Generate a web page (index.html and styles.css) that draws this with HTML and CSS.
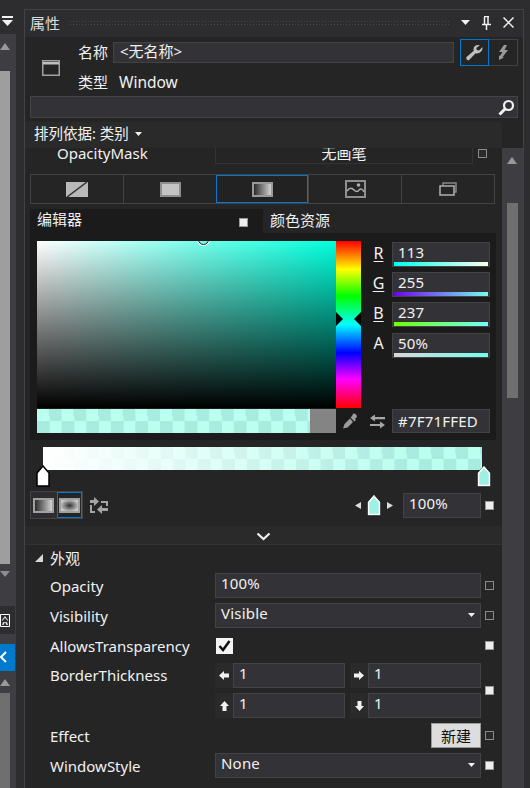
FILE: index.html
```html
<!DOCTYPE html>
<html lang="zh-CN">
<head>
  <meta charset="utf-8">
  <title>属性</title>
  <link rel="stylesheet" href="styles.css">
</head>
<body>

<aside class="side">
  <div class="side-top">
    <svg class="side-menu" width="11" height="11" viewBox="0 0 11 11"><path d="M0 0h11v2H0zM0 4h11L5.500 10z" fill="#f1f1f1"/></svg>
  </div>
  <div class="side-bar">
    <div class="arrow-up side-arrow"></div>
    <div class="side-thumb"></div>
    <div class="arrow-down side-arrow"></div>
    <div class="side-tool"><svg width="10" height="13" viewBox="0 0 10 13"><path d="M.5.500h9v12h-9z" fill="none" stroke="#fff"/><path d="M5 2 2 6v1l3-3 3 3V6zM3 8l-1 3h1.500L5 8l1.500 3H8L7 8z" fill="#ddd"/></svg></div>
    <div class="side-active"><svg width="10" height="14" viewBox="0 0 10 14"><path d="M6 2 1 7l5 5" fill="none" stroke="#fff" stroke-width="2"/></svg></div>
    <div class="arrow-up side-arrow second"></div>
    <div class="side-thumb dim"></div>
  </div>
</aside>

<section class="panel">
  <header class="titlebar">
    <span class="title">属性</span>
    <span class="grip"></span>
    <svg width="9" height="5" viewBox="0 0 9 5"><path d="M0 0h9L4.500 5z" fill="#f1f1f1"/></svg>
    <svg class="pin" width="9" height="14" viewBox="0 0 9 14"><path d="M2 .500h5M2.500 1v7M6 1v7M0 8.500h9M4.500 9v5" fill="none" stroke="#f1f1f1" stroke-width="1.500"/></svg>
    <svg class="close" width="11" height="11" viewBox="0 0 11 11"><path d="M.5.500l10 10M10.500.500l-10 10" stroke="#f1f1f1" stroke-width="1.500"/></svg>
  </header>

  <div class="head">
    <svg class="win-icon" width="18" height="16" viewBox="0 0 18 16"><rect x=".75" y=".75" width="16.500" height="14.500" fill="none" stroke="#a0a0a0" stroke-width="1.500"/><path d="M1 2h16v2.500H1z" fill="#c0c0c0"/></svg>
    <span class="head-label">名称</span>
    <div class="name-box">&lt;无名称&gt;</div>
    <div class="mode-btns">
      <div class="mode on"><svg width="17" height="16" viewBox="0 0 17 16"><path d="M16.500 2 13 5.500 10.800 5 10.300 3 13.800 .3C11 -.6 7.500 1 7.500 4.200c0 .6.100 1.100.300 1.500L.8 11.700c-1.500 1.400.4 4.600 2.300 3.300l6.500-6.800c3.300 1 7.400-1.800 6.900-6.200z" fill="#c0c0c0"/></svg></div>
      <div class="mode"><svg width="11" height="15" viewBox="0 0 11 15"><path d="M6 0 1 7h3.500L2 11l-1-.5L1 15l5-2.500-1.500-.5L10 5H6.500L9 0z" fill="#9a9a9a"/></svg></div>
    </div>
    <span class="head-label second">类型</span>
    <span class="type-name">Window</span>
  </div>

  <div class="search">
    <svg width="17" height="17" viewBox="0 0 17 17"><circle cx="10.500" cy="6.500" r="4.500" fill="none" stroke="#f1f1f1" stroke-width="2.200"/><path d="M7 10l-5.500 5.500" stroke="#f1f1f1" stroke-width="3"/></svg>
  </div>

  <div class="sortbar">排列依据: 类别 <svg width="7" height="4" viewBox="0 0 7 4"><path d="M0 0h7L3.500 4z" fill="#f1f1f1"/></svg></div>

  <div class="body">
    <div class="props">
      <div class="cut-row">
        <span class="cut-name">OpacityMask</span>
        <span class="cut-box">无画笔</span>
        <span class="sq"></span>
      </div>

      <div class="brush-tabs">
        <div class="brush-tab"><svg width="22" height="15" viewBox="0 0 22 15"><path d="M0 0h22v15H0z" fill="#b9b9b9"/><path d="M1 15 21 0" stroke="#333" stroke-width="1.500"/></svg></div>
        <div class="brush-tab"><svg width="21" height="15" viewBox="0 0 21 15"><rect x="1" y="1" width="19" height="13" fill="#c4c4c4" stroke="#8f8f8f" stroke-width="2"/></svg></div>
        <div class="brush-tab on"><svg width="21" height="15" viewBox="0 0 21 15"><defs><linearGradient id="g1"><stop offset="0" stop-color="#222"/><stop offset="1" stop-color="#ddd"/></linearGradient></defs><rect x="1" y="1" width="19" height="13" fill="url(#g1)" stroke="#999" stroke-width="2"/></svg></div>
        <div class="brush-tab"><svg width="21" height="18" viewBox="0 0 21 18"><rect x="1" y="1" width="19" height="16" fill="none" stroke="#8f8f8f" stroke-width="2"/><circle cx="13.500" cy="5" r="1.800" fill="#b0b0b0"/><path d="M2 11c3-4 5-3 7-1s4 2 5 0 4-1 5 2" fill="none" stroke="#b0b0b0" stroke-width="1.500"/></svg></div>
        <div class="brush-tab"><svg width="18" height="14" viewBox="0 0 18 14"><path d="M4 3V1h13v9h-2" fill="none" stroke="#888" stroke-width="1.500"/><rect x="1" y="4" width="14" height="9" fill="#252526" stroke="#b0b0b0" stroke-width="1.500"/></svg></div>
      </div>

      <div class="editor-tabs">
        <div class="editor-tab on">编辑器<span class="sq full"></span></div>
        <div class="editor-tab">颜色资源</div>
      </div>

      <div class="editor">
        <div class="sv"><span class="sv-dot"></span></div>
        <div class="hue"><span class="hue-l"></span><span class="hue-r"></span></div>
        <div class="channels">
          <div class="channel"><u>R</u><div class="field">113<i class="strip s-r"></i></div></div>
          <div class="channel"><u>G</u><div class="field">255<i class="strip s-g"></i></div></div>
          <div class="channel"><u>B</u><div class="field">237<i class="strip s-b"></i></div></div>
          <div class="channel"><b>A</b><div class="field">50%<i class="strip s-a"></i></div></div>
        </div>
        <div class="preview"><div class="preview-check"></div><div class="preview-gray"></div></div>
        <div class="tools">
          <svg width="15" height="16" viewBox="0 0 15 16"><path d="M10 1c1.500-1.500 5 1.500 3.500 3.500L12 6l1 1-1.500 1.500-4-4L9 3zM7 5.500 1.500 11 0 15.500 4.500 14.500 10 9z" fill="#9c9c9c"/></svg>
          <svg width="15" height="15" viewBox="0 0 15 15"><path d="M5 .5 0 4l5 3.500V5.200h10V3H5zM10 7.500l5 3.500-5 3.500v-2.400H0v-2.200h10z" fill="#a6a6a6"/></svg>
        </div>
        <div class="field hex">#7F71FFED</div>
      </div>

      <div class="grad">
        <div class="grad-bar"></div>
        <svg class="stop stop-l" width="14" height="22" viewBox="0 0 14 22"><path d="M7 1 13 8v13H1V8z" fill="#fff" stroke="#000" stroke-width="1.500"/></svg>
        <svg class="stop stop-r" width="14" height="22" viewBox="0 0 14 22"><path d="M7 .5 13.500 8v13.500H.5V8z" fill="#000"/><path d="M7 2 12.500 8.300V20.500H1.500V8.300z" fill="#9ff0e4" stroke="#fff" stroke-width="1.500"/></svg>
      </div>

      <div class="grad-row">
        <div class="kinds">
          <div class="kind"><svg width="21" height="15" viewBox="0 0 21 15"><rect x="1" y="1" width="19" height="13" fill="url(#g1)" stroke="#a0a0a0" stroke-width="2"/></svg></div>
          <div class="kind on"><svg width="21" height="15" viewBox="0 0 21 15"><defs><radialGradient id="g2"><stop offset="0" stop-color="#333"/><stop offset="1" stop-color="#ccc"/></radialGradient></defs><rect x="1" y="1" width="19" height="13" fill="url(#g2)" stroke="#a0a0a0" stroke-width="2"/></svg></div>
        </div>
        <svg class="shuffle" width="18" height="17" viewBox="0 0 18 17"><path d="M0 3h4V0l5 4.500L4 9V6H0zM18 11h-6V8l-5 4.500 5 4.500v-3h6zM0 8h2v6h3v2H0zM11 4h7v5h-2V6h-5z" fill="#a4a4a4"/></svg>
        <div class="stop-pick">
          <svg width="6" height="7" viewBox="0 0 6 7"><path d="M6 0v7L0 3.500z" fill="#ddd"/></svg>
          <svg width="14" height="22" viewBox="0 0 14 22"><path d="M7 .5 13.500 8v13.500H.5V8z" fill="#000"/><path d="M7 2 12.500 8.300V20.500H1.500V8.300z" fill="#9ff0e4" stroke="#fff" stroke-width="1.500"/></svg>
          <svg width="6" height="7" viewBox="0 0 6 7"><path d="M0 0v7l6-3.500z" fill="#ddd"/></svg>
        </div>
        <div class="field pct">100%</div>
        <span class="sq full"></span>
      </div>

      <div class="expander"><svg width="15" height="9" viewBox="0 0 15 9"><path d="M1.500 1.500 7.500 7l6-5.500" fill="none" stroke="#f1f1f1" stroke-width="2.200"/></svg></div>

      <div class="group-head"><svg width="8" height="8" viewBox="0 0 8 8"><path d="M8 0v8H0z" fill="#d8d8d8"/></svg>外观</div>

      <div class="rows">
        <span class="row-name">Opacity</span>
        <div class="field">100%</div>
        <span class="sq"></span>

        <span class="row-name">Visibility</span>
        <div class="field combo">Visible<svg width="7" height="4" viewBox="0 0 7 4"><path d="M0 0h7L3.500 4z" fill="#f1f1f1"/></svg></div>
        <span class="sq"></span>

        <span class="row-name">AllowsTransparency</span>
        <div class="check-cell"><div class="check"><svg width="13" height="12" viewBox="0 0 13 12"><path d="M1.500 6 5 10l6.500-9" fill="none" stroke="#111" stroke-width="2.500"/></svg></div></div>
        <span class="sq full"></span>

        <span class="row-name tall">BorderThickness</span>
        <div class="thick tall">
          <div class="side-val"><span class="dir"><svg width="10" height="9" viewBox="0 0 10 9"><path d="M5 0v2.500h5v4H5V9L0 4.500z" fill="#f1f1f1"/></svg></span><div class="field">1</div></div>
          <div class="side-val"><span class="dir"><svg width="10" height="9" viewBox="0 0 10 9"><path d="M5 0v2.500H0v4h5V9l5-4.500z" fill="#f1f1f1"/></svg></span><div class="field">1</div></div>
          <div class="side-val"><span class="dir"><svg width="9" height="10" viewBox="0 0 9 10"><path d="M0 5h2.500v5h4V5H9L4.500 0z" fill="#f1f1f1"/></svg></span><div class="field">1</div></div>
          <div class="side-val"><span class="dir"><svg width="9" height="10" viewBox="0 0 9 10"><path d="M0 5h2.500V0h4v5H9l-4.500 5z" fill="#f1f1f1"/></svg></span><div class="field">1</div></div>
        </div>
        <span class="sq full tall"></span>

        <span class="row-name">Effect</span>
        <div class="btn-cell"><button class="new-btn">新建</button></div>
        <span class="sq"></span>

        <span class="row-name">WindowStyle</span>
        <div class="field combo">None<svg width="7" height="4" viewBox="0 0 7 4"><path d="M0 0h7L3.500 4z" fill="#f1f1f1"/></svg></div>
        <span class="sq full"></span>
      </div>
    </div>

    <div class="vscroll">
      <div class="arrow-up"></div>
      <div class="vthumb"></div>
    </div>
  </div>
</section>

</body>
</html>
```

FILE: styles.css
```css
:root { --bg:#252526; --chrome:#2d2d30; --track:#3e3e42; --line:#434346; --field:#333337; --fg:#f1f1f1; --blue:#007acc; --well:#1b1b1c; }
*{box-sizing:border-box}
html,body{height:100%}
body{margin:0;height:788px;overflow:hidden;display:flex;background:var(--chrome);color:var(--fg);
     font:15px/1.2 "Noto Sans","Noto Sans CJK SC",sans-serif}
svg{display:block;flex:none}
u{text-underline-offset:2px}

/* left strip */
.side{width:24px;flex:none}
.side-top{height:34px;padding:16px 0 0 2px}
.side-bar{width:16px;height:754px;background:var(--track);display:flex;flex-direction:column;align-items:flex-start}
.side-arrow{margin:9px 0 0 0}
.side-thumb{width:10px;height:494px;margin-top:21px;background:#9e9e9e}
.side-thumb.dim{height:95px;margin-top:7px;background:#6f6f6f}
.arrow-up{width:0;height:0;border:5px solid transparent;border-top:0;border-bottom:7px solid #999}
.arrow-down{width:0;height:0;border:5px solid transparent;border-bottom:0;border-top:6px solid #8c8c8c}
.arrow-down.side-arrow{margin-top:7px}
.side-tool{width:15px;height:28px;margin-top:29px;padding-top:8px;background:#2d2d30}
.side-active{width:15px;height:27px;margin-top:10px;padding-top:6px;background:var(--blue)}
.side-arrow.second{margin-top:8px}

/* panel */
.panel{width:500px;flex:none;margin-top:9px;border:1px solid var(--line);border-bottom:0;background:var(--bg);display:flex;flex-direction:column}
.titlebar{height:27px;flex:none;background:var(--chrome);display:flex;align-items:center;padding:0 9px 2px 5px}
.title{color:#dcdcdc;width:39px}
.grip{width:382px;height:6px;background:radial-gradient(circle,#4a4a4e 1px,transparent 1px) 0 0/3px 3px}
.titlebar>svg{margin-left:10px}
.titlebar .pin{margin-left:12px}
.titlebar .close{margin-left:12px}

.head{display:grid;grid-template-columns:36px 35px 1fr 58px;grid-template-rows:27px 30px;padding:2px 5px 0 17px;height:59px;flex:none;align-items:center}
.win-icon{grid-row:1/3;grid-column:1;margin-top:1px}
.head-label{grid-column:2;grid-row:1;margin-top:-2px}
.head-label.second{grid-row:2;margin-top:1px}
.name-box{grid-column:3;grid-row:1;height:21px;margin-right:6px;background:var(--field);border:1px solid var(--line);padding-left:6px;line-height:17px}
.type-name{grid-column:3;grid-row:2;margin:2px 0 0 6px;font-size:15.500px}
.mode-btns{grid-column:4;grid-row:1;display:flex;height:27px}
.mode{width:29px;border:1px solid var(--line);display:flex;align-items:center;justify-content:center}
.mode+.mode{border-left:0}
.mode.on{border:1px solid var(--blue)}
.search{flex:none;height:22px;margin:0 5px;background:var(--field);border:1px solid var(--line);display:flex;justify-content:flex-end;align-items:center;padding-right:2px}
.sortbar{flex:none;width:477px;height:26px;margin-top:4px;padding:0 0 3px 9px;background:#2a2a2b;display:flex;align-items:center;gap:6px;font-size:14.500px}

.body{flex:1;display:flex;min-height:0}
.props{width:477px;flex:none}
.vscroll{width:22px;background:var(--track);padding:9px 0 0 5px}
.vscroll .arrow-up{border-left-width:5.500px;border-right-width:5.500px}
.vthumb{width:11px;height:195px;margin-top:39px;background:#6f6f6f}

.sq{display:block;width:9px;height:9px;border:1px solid #8a8a8a;background:#2a2a2a}
.sq.full{background:#eee;border-color:#999}

.cut-row{height:16px;overflow:hidden;display:flex;padding-left:32px}
.cut-name{width:158px;margin-top:-4px}
.cut-box{width:258px;height:16px;border:1px solid #333;border-top:0;text-align:center;line-height:10px;margin-right:5px}
.cut-row .sq{margin-top:1px}

.brush-tabs{display:flex;height:30px;margin:10px 7px 0 5px;border:1px solid var(--line)}
.brush-tab{flex:1;display:flex;align-items:center;justify-content:center;border-left:1px solid var(--line)}
.brush-tab:first-child{border-left:0}
.brush-tab.on{outline:1px solid var(--blue);outline-offset:-1px;border-left:0;background:#222}

.editor-tabs{display:flex;height:24px;margin:5px 0 0 5px}
.editor-tab{padding:2px 0 0 7px;flex:1}
.editor-tab.on{flex:none;width:233px;background:var(--well);display:flex;padding-top:1px;padding-right:15px;justify-content:space-between}
.editor-tab.on .sq{margin-top:8px}

.editor{width:466px;height:207px;margin-left:5px;padding:8px 6px 7px 7px;background:var(--well);display:grid;grid-template-columns:299px 25px 31px 98px;grid-template-rows:167px 24px;row-gap:1px}
.sv{position:relative;overflow:hidden;background:linear-gradient(to top,#000,transparent),linear-gradient(to right,#fff,#00ffdc)}
.sv-dot{position:absolute;left:161px;top:-7px;width:11px;height:11px;border-radius:50%;background:#71ffed;border:1px solid #222;box-shadow:0 0 0 1px #fff}
.hue{position:relative;background:linear-gradient(#f00,#ff0 17%,#0f0 33%,#0ff 50%,#00f 67%,#f0f 83%,#f00)}
.hue-l,.hue-r{position:absolute;top:71px;width:0;height:0;border:7px solid transparent}
.hue-l{left:0;border-left:7px solid #000}
.hue-r{right:0;border-right:7px solid #000}
.channels{grid-column:3/5;grid-row:1;display:flex;flex-direction:column;gap:5.200px;padding-top:1px}
.channel{display:grid;grid-template-columns:31px 98px;height:25px;align-items:center}
.channel u,.channel b{font-size:16px;font-weight:400;text-align:center;padding-left:4px;padding-bottom:2px}
.field{position:relative;height:25px;background:var(--field);border:1px solid var(--line);padding-left:5px;font-size:15px;line-height:19px;letter-spacing:.2px}
.strip{position:absolute;left:1px;right:1px;bottom:0;height:4px}
.s-r{background:linear-gradient(to right,#00ffed,#ffffed)}
.s-g{background:linear-gradient(to right,#7100ed,#71ffed)}
.s-b{background:linear-gradient(to right,#71ff00,#71ffff)}
.s-a{background:linear-gradient(to right,#d8d8d8,#71ffed)}
.preview{display:flex}
.preview-check{width:273px;background:repeating-conic-gradient(#a8ebdf 0 25%,#baffef 0 50%) 0 0/24.600px 24px}
.preview-gray{flex:1;background:#848484}
.tools{grid-column:2/4;display:flex;align-items:center;gap:12px;padding-left:7px}
.hex{height:24px;line-height:22px}

.grad{position:relative;height:44px;margin-top:7px;padding-left:18px}
.grad-bar{width:439px;height:23px;background:linear-gradient(to right,#fff,rgba(255,255,255,0) 85%),repeating-conic-gradient(#a8ebdf 0 25%,#baffef 0 50%) 7px 0/24.600px 24px}
.stop{position:absolute;top:18px}
.stop-l{left:11px}
.stop-r{left:452px}

.grad-row{display:flex;align-items:center;height:28px;padding:0 8px 0 5px}
.kinds{display:flex;height:28px;border:1px solid var(--line);width:53px}
.kind{flex:1;display:flex;align-items:center;justify-content:center;background:#2d2d30}
.kind.on{outline:1px solid var(--blue);outline-offset:-1px;background:#252526}
.shuffle{margin-left:7px}
.stop-pick{display:flex;align-items:center;gap:6px;margin-left:auto;margin-right:10px}
.pct{width:78px;height:25px;margin-right:4px}

.expander{height:19px;margin-top:7px;background:#2a2a2b;border-bottom:1px solid #333;display:flex;justify-content:center;padding-top:6px}
.group-head{height:28px;display:flex;align-items:center;gap:7px;padding:0 0 2px 10px}

.rows{display:grid;grid-template-columns:190px 266px 13px;grid-auto-rows:25px;row-gap:5px;align-items:center}
.rows .field{line-height:18px}
.rows .sq{margin-left:4px}
.rows .tall{grid-row:span 2}
.row-name{padding-left:25px;white-space:nowrap}
.row-name.tall{align-self:start;padding-top:3px}
.combo{display:flex;justify-content:space-between;padding-right:5px}
.combo svg{margin-top:9px}
.check{width:17px;height:16px;background:#f5f5f5;display:flex;align-items:center;justify-content:center}
.check-cell{padding-left:1px}
.thick{display:grid;grid-template-columns:130px 131px;column-gap:5px;row-gap:5px;height:100%}
.side-val{display:flex}
.dir{width:18px;flex:none;background:#2a2a2b;display:flex;align-items:center;justify-content:center}
.side-val .field{flex:1}
.btn-cell{display:flex;justify-content:flex-end}
.new-btn{width:50px;height:25px;padding:0;border:1px solid #999;background:#ddd;color:#111;font:15px/1 "Noto Sans CJK SC",sans-serif}
```
